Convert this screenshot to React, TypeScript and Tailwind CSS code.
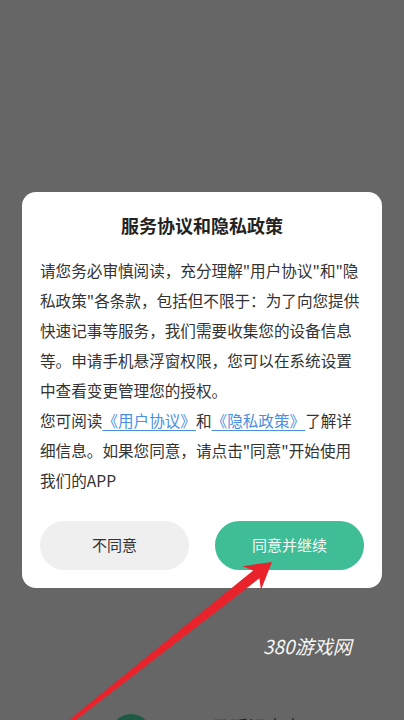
import React from "react";

const font = { fontFamily: '"Noto Sans CJK SC", "Noto Sans", sans-serif' };

export default function App() {
  return (
    <div
      className="relative w-full h-[720px] overflow-hidden bg-[#666666] flex flex-col"
      style={font}
    >
      <div className="mt-[192px] mx-[22px] bg-white rounded-[14px] px-[18px] pt-[21px] pb-[18px] flex flex-col">
        <h1 className="text-center text-[18px] leading-[24px] font-bold text-[#222222]">
          服务协议和隐私政策
        </h1>
        <p className="mt-[18px] text-[15.6px] leading-[30px] text-[#333333] whitespace-nowrap">
          请您务必审慎阅读，充分理解"用户协议"和"隐
          <br />
          私政策"各条款，包括但不限于：为了向您提供
          <br />
          快速记事等服务，我们需要收集您的设备信息
          <br />
          等。申请手机悬浮窗权限，您可以在系统设置
          <br />
          中查看变更管理您的授权。
          <br />
          您可阅读
          <span className="text-[#4a90e2] underline underline-offset-[3px] decoration-[1px]">《用户协议》</span>
          和
          <span className="text-[#4a90e2] underline underline-offset-[3px] decoration-[1px]">《隐私政策》</span>
          了解详
          <br />
          细信息。如果您同意，请点击"同意"开始使用
          <br />
          我们的APP
        </p>
        <div className="mt-[26px] flex justify-between">
          <button className="w-[149px] h-[49px] rounded-full bg-[#efefef] text-[15px] text-[#333333]">
            不同意
          </button>
          <button className="w-[149px] h-[49px] rounded-full bg-[#3ebd96] text-[15px] text-[#f4fbf8]">
            同意并继续
          </button>
        </div>
      </div>

      <div className="mt-[46px] pl-[263px] text-[19px] leading-[24px] italic text-[#f7f7f7] whitespace-nowrap">
        380游戏网
      </div>

      <div className="mt-[56px] pl-[111px] flex items-start">
        <div className="w-[40px] h-[40px] rounded-full bg-[#1d5a43] shrink-0" />
        <div className="ml-[61px] text-[18px] leading-[24px] text-[#222222] whitespace-nowrap">
          马瑶记事本
        </div>
      </div>

      <svg
        className="absolute inset-0 pointer-events-none"
        width="404"
        height="720"
        viewBox="0 0 404 720"
      >
        <polygon
          points="272,562 260.9,589.9 259.4,578.3 67.2,726.6 64.8,723.4 253.2,570.5 242.3,566.3"
          fill="#e8232b"
        />
      </svg>
    </div>
  );
}
